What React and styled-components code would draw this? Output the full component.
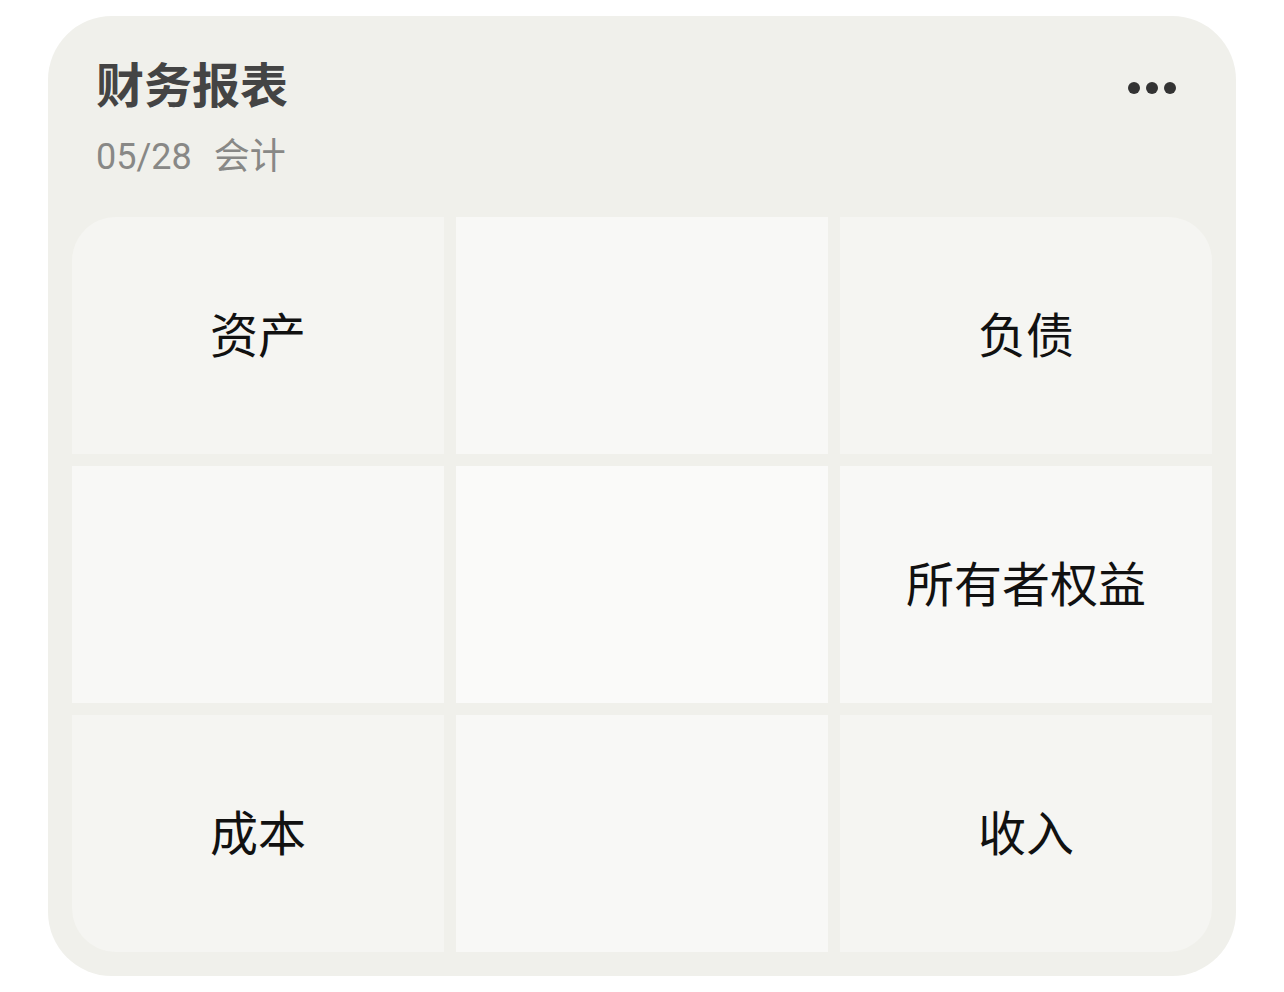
import styled, { createGlobalStyle } from "styled-components";

const Global = createGlobalStyle`
  body {
    margin: 0;
    background: #ffffff;
    font-family: "Noto Sans CJK SC", "Noto Sans", sans-serif;
  }
`;

const Page = styled.div`
  padding: 16px 48px;
`;

const Card = styled.div`
  width: 1188px;
  height: 960px;
  box-sizing: border-box;
  background: #f0f0eb;
  border-radius: 64px;
  padding: 0 24px 24px;
  display: flex;
  flex-direction: column;
`;

const Header = styled.div`
  flex-shrink: 0;
  display: flex;
  justify-content: space-between;
  align-items: flex-start;
  padding: 38px 36px 0 24px;
  height: 201px;
  box-sizing: border-box;
`;

const Titles = styled.div`
  display: flex;
  flex-direction: column;
  gap: 25px;
`;

const Title = styled.h1`
  margin: 0;
  font-size: 48px;
  line-height: 56px;
  font-weight: 700;
  color: #444444;
`;

const Sub = styled.div`
  font-family: "Roboto", "Noto Sans CJK SC", sans-serif;
  font-size: 36px;
  line-height: 44px;
  color: #888886;
  display: flex;
  gap: 22px;
`;

const More = styled.button`
  border: none;
  background: none;
  padding: 0;
  margin-top: 28px;
  display: flex;
  gap: 6px;
  cursor: pointer;
  span {
    width: 12px;
    height: 12px;
    border-radius: 50%;
    background: #333333;
  }
`;

const Grid = styled.div`
  flex: 1;
  display: grid;
  grid-template-columns: repeat(3, 1fr);
  grid-template-rows: repeat(3, 1fr);
  gap: 12px;
  border-radius: 44px;
  overflow: hidden;
`;

const TONES = {
  corner: "#f5f5f2",
  edge: "#f8f8f6",
  center: "#fafaf9",
};

const Cell = styled.div`
  background: ${(p) => TONES[p.tone]};
  display: flex;
  align-items: center;
  justify-content: center;
  padding-bottom: 8px;
  font-size: 48px;
  color: #111111;
`;

const cells = [
  { tone: "corner", label: "资产" },
  { tone: "edge", label: "" },
  { tone: "corner", label: "负债" },
  { tone: "edge", label: "" },
  { tone: "center", label: "" },
  { tone: "edge", label: "所有者权益" },
  { tone: "corner", label: "成本" },
  { tone: "edge", label: "" },
  { tone: "corner", label: "收入" },
];

export default function App() {
  return (
    <>
      <Global />
      <Page>
        <Card>
          <Header>
            <Titles>
              <Title>财务报表</Title>
              <Sub>
                <span>05/28</span>
                <span>会计</span>
              </Sub>
            </Titles>
            <More aria-label="更多">
              <span />
              <span />
              <span />
            </More>
          </Header>
          <Grid>
            {cells.map((c, i) => (
              <Cell key={i} tone={c.tone}>
                {c.label}
              </Cell>
            ))}
          </Grid>
        </Card>
      </Page>
    </>
  );
}
